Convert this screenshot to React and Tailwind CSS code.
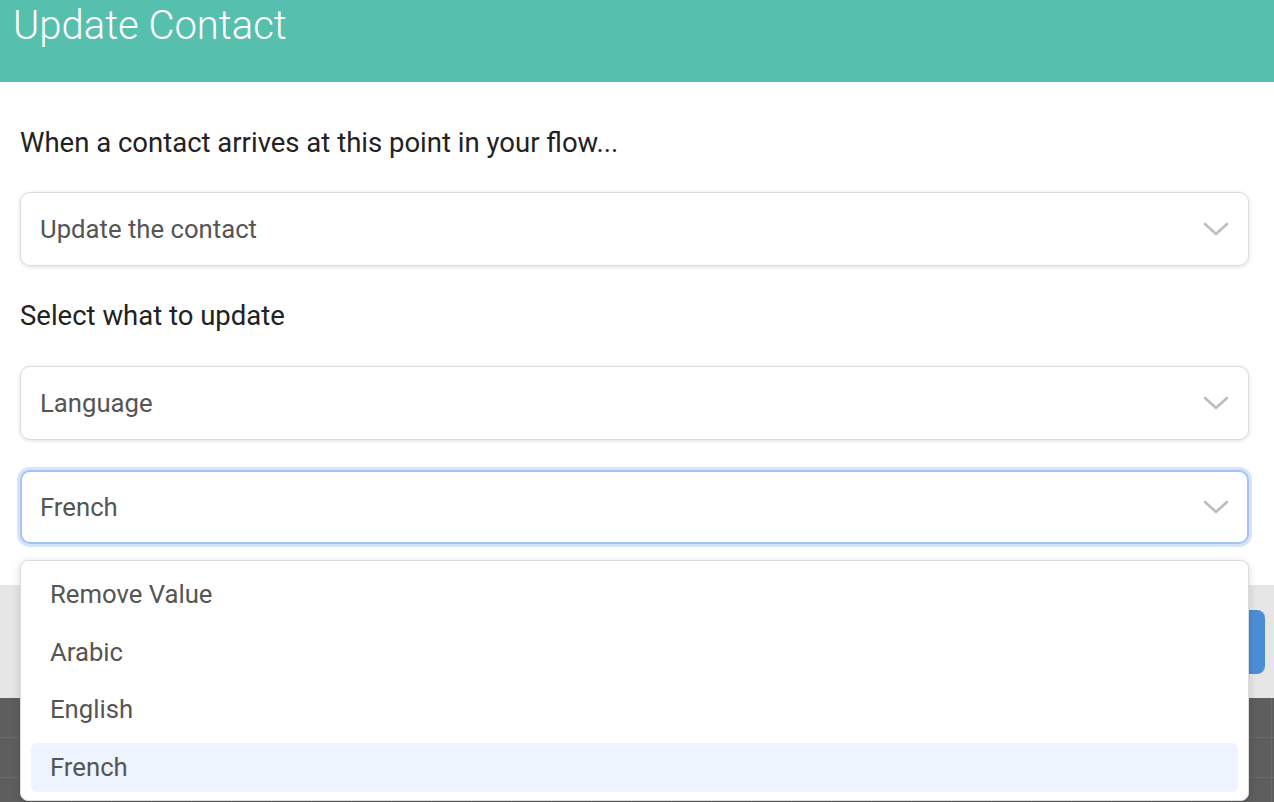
import React from 'react';

const font = { fontFamily: 'Roboto, "Noto Sans", sans-serif' };

function Chevron() {
  return (
    <svg width="26" height="16" viewBox="0 0 26 16" fill="none">
      <path d="M2 3l11 10L24 3" stroke="#bdbdbd" strokeWidth="2.6" strokeLinecap="round" strokeLinejoin="round" />
    </svg>
  );
}

function Select({ value, focused }) {
  return (
    <div
      className={`flex items-center justify-between h-[74px] rounded-[10px] bg-white ${
        focused
          ? 'pl-[18px] pr-[18px] border-2 border-[#a3c3f5] shadow-[0_0_0_3px_#d6e4fb]'
          : 'pl-[19px] pr-[19px] border border-[#dcdcdc] shadow-[0_1px_4px_rgba(0,0,0,0.12)]'
      }`}
    >
      <span className="text-[25.7px] text-[#555555]">{value}</span>
      <Chevron />
    </div>
  );
}

const options = ['Remove Value', 'Arabic', 'English', 'French'];

export default function App() {
  return (
    <div className="w-[1274px] h-[802px] overflow-hidden flex flex-col bg-[#5e5e5e]" style={font}>
      <div className="h-[82px] shrink-0 bg-[#56bfae] px-[13px] pt-[6px]">
        <h1 className="text-[40px] leading-[40px] font-light text-white">Update Contact</h1>
      </div>

      <div className="bg-white pl-[20px] pr-[25px] pt-[45px] pb-[41px]">
        <p className="text-[27.5px] leading-[32px] text-[#222222]">When a contact arrives at this point in your flow...</p>
        <div className="mt-[33px]">
          <Select value="Update the contact" />
        </div>
        <p className="mt-[34px] text-[27.5px] leading-[32px] text-[#222222]">Select what to update</p>
        <div className="mt-[34px]">
          <Select value="Language" />
        </div>
        <div className="relative mt-[30px]">
          <Select value="French" focused />
          <div className="absolute left-0 right-0 top-[90px] z-10 rounded-[8px] border border-[#dcdcdc] bg-white px-[10px] pt-[9px] pb-[8px] shadow-[0_2px_8px_rgba(0,0,0,0.15)] flex flex-col gap-[8.5px]">
            {options.map((o) => (
              <div
                key={o}
                className={`h-[49px] flex items-center pl-[19px] rounded-[6px] text-[25.7px] text-[#555555] ${
                  o === 'French' ? 'bg-[#eef4fd]' : ''
                }`}
              >
                {o}
              </div>
            ))}
          </div>
        </div>
      </div>

      <div className="h-[113px] shrink-0 bg-[#e6e6e6] flex items-center justify-end pr-[9px]">
        <button className="h-[64px] w-[130px] rounded-[8px] bg-[#4a8fd6] text-white text-[24px]">Save</button>
      </div>

      <div className="flex-1 bg-[#5e5e5e] bg-[linear-gradient(#66696e_1px,transparent_1px),linear-gradient(90deg,#66696e_1px,transparent_1px)] bg-[size:40px_40px] bg-[position:-9px_-1px]" />
    </div>
  );
}
